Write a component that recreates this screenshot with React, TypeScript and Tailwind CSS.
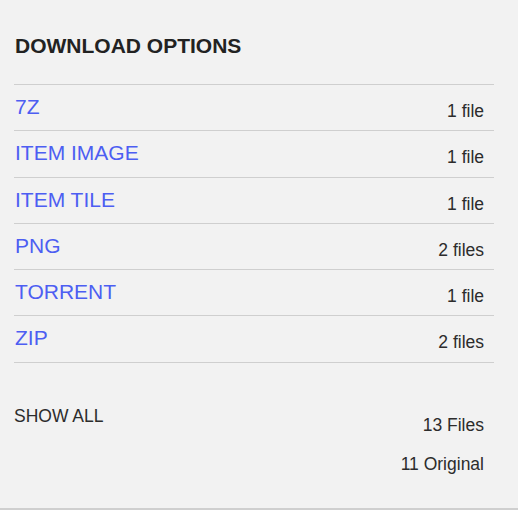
const options = [
    {name: "7Z", count: "1 file"},
    {name: "ITEM IMAGE", count: "1 file"},
    {name: "ITEM TILE", count: "1 file"},
    {name: "PNG", count: "2 files"},
    {name: "TORRENT", count: "1 file"},
    {name: "ZIP", count: "2 files"},
];

export default function App() {
    return (
        <div className="w-[518px] bg-white" style={{fontFamily: '"Liberation Sans", Arial, sans-serif'}}>
            <div className="bg-[#f2f2f2] border-b-2 border-[#cfcfcf] pl-[14px] pr-[24px] pt-[34px] h-[510px]">
                {/* Header */}
                <h2 className="text-[21px] leading-[24px] font-bold text-[#222] pl-px mb-[26px]">
                    DOWNLOAD OPTIONS
                </h2>

                {/* Formats */}
                <div className="border-b border-[#cfcfcf]">
                    {options.map((opt) => (
                        <div key={opt.name} className="h-[46.3px] border-t border-[#cfcfcf] flex items-start justify-between">
                            <a href="#" className="mt-[10px] pl-px text-[21px] leading-[24px] text-[#4d5ef2]">
                                {opt.name}
                            </a>
                            <span className="mt-[16px] mr-[10px] text-[17.5px] leading-[21px] text-[#2c2c2c]">
                                {opt.count}
                            </span>
                        </div>
                    ))}
                </div>

                {/* Totals */}
                <div className="flex justify-between items-start mt-[43px]">
                    <a href="#" className="text-[17.5px] leading-[21px] text-[#2c2c2c]">SHOW ALL</a>
                    <div className="flex flex-col items-end mt-[9px] mr-[10px] gap-[18.5px] text-[17.5px] leading-[21px] text-[#2c2c2c]">
                        <span>13 Files</span>
                        <span>11 Original</span>
                    </div>
                </div>
            </div>
        </div>
    );
}
